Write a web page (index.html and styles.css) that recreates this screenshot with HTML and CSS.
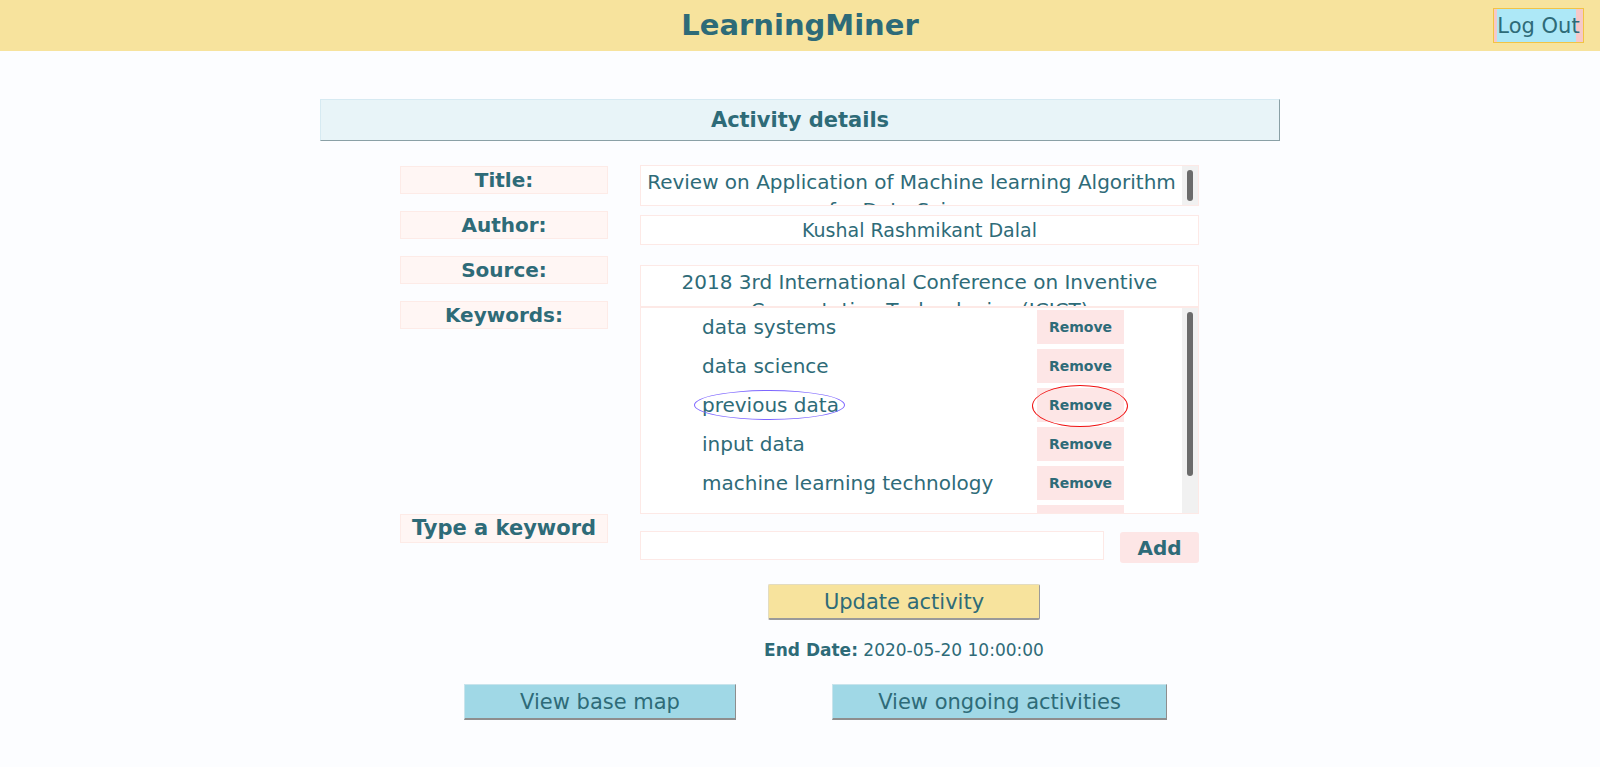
FILE: index.html
```html
<!DOCTYPE html>
<html lang="en">
<head>
<meta charset="utf-8">
<title>LearningMiner</title>
<link rel="stylesheet" href="styles.css">
</head>
<body>
<header class="topbar">
  <div class="topbar-side"></div>
  <h1 class="brand">LearningMiner</h1>
  <div class="topbar-side topbar-right"><button class="logout">Log Out</button></div>
</header>
<main class="page">
  <h2 class="section-title">Activity details</h2>
  <section class="details">
    <div class="labels">
      <div class="label">Title:</div>
      <div class="label">Author:</div>
      <div class="label">Source:</div>
      <div class="label">Keywords:</div>
    </div>
    <div class="values">
      <div class="value value-title">
        <div class="scroll-content">Review on Application of Machine learning Algorithm for Data Science</div>
        <div class="scrollbar"><div class="thumb thumb-title"></div></div>
      </div>
      <div class="value value-author">Kushal Rashmikant Dalal</div>
      <div class="value value-source">2018 3rd International Conference on Inventive Computation Technologies (ICICT)</div>
      <div class="keywords">
        <div class="kw-list">
          <div class="kw-row"><span class="kw-cell"><span class="kw-text">data systems</span></span><button class="remove">Remove</button></div>
          <div class="kw-row"><span class="kw-cell"><span class="kw-text">data science</span></span><button class="remove">Remove</button></div>
          <div class="kw-row"><span class="kw-cell"><span class="kw-text mark-blue">previous data</span></span><button class="remove mark-red">Remove</button></div>
          <div class="kw-row"><span class="kw-cell"><span class="kw-text">input data</span></span><button class="remove">Remove</button></div>
          <div class="kw-row"><span class="kw-cell"><span class="kw-text">machine learning technology</span></span><button class="remove">Remove</button></div>
          <div class="kw-row"><span class="kw-cell"><span class="kw-text">learning algorithm</span></span><button class="remove">Remove</button></div>
        </div>
        <div class="scrollbar"><div class="thumb thumb-kw"></div></div>
      </div>
    </div>
  </section>
  <section class="add-row">
    <div class="label label-type">Type a keyword</div>
    <input class="kw-input" type="text">
    <button class="add">Add</button>
  </section>
  <section class="actions">
    <button class="update">Update activity</button>
    <p class="end-date"><b>End Date:</b> 2020-05-20 10:00:00</p>
  </section>
  <section class="nav-buttons">
    <button class="nav-btn nav-base">View base map</button>
    <button class="nav-btn nav-ongoing">View ongoing activities</button>
  </section>
</main>
</body>
</html>
```
FILE: styles.css
```css
* { box-sizing: border-box; }
html, body { margin: 0; padding: 0; }
body {
  background: #fcfdff;
  font-family: "DejaVu Sans", "Liberation Sans", sans-serif;
  color: #2e6b78;
  width: 1600px;
  height: 767px;
  overflow: hidden;
}
button, input { font-family: inherit; color: inherit; }

.topbar {
  height: 51px;
  background: #f7e39d;
  display: grid;
  grid-template-columns: 1fr auto 1fr;
  align-items: start;
}
.brand {
  margin: 0;
  font-size: 29px;
  font-weight: bold;
  line-height: 51px;
  color: #2e6b78;
}
.topbar-right { display: flex; justify-content: flex-end; padding: 8px 16px 0 0; }
.logout {
  width: 91px;
  height: 35px;
  padding: 0;
  font-size: 21px;
  border: 1px solid #f2c443;
  background: linear-gradient(to right, #f5c8c8 0, #f5c8c8 3px, #ade8f7 3px, #ade8f7 82px, #f5c8c8 82px);
  color: #2e6b78;
}

.page { width: 960px; margin: 48px auto 0; }
.section-title {
  margin: 0;
  height: 42px;
  line-height: 41px;
  text-align: center;
  font-size: 21px;
  font-weight: bold;
  background: #e8f4f8;
  border-top: 1px solid #d6eaf2;
  border-left: 1px solid #d6eaf2;
  border-bottom: 1px solid #8aa0a6;
  border-right: 1px solid #8aa0a6;
}

.details {
  display: flex;
  gap: 32px;
  padding-left: 80px;
  margin-top: 24px;
}
.labels { width: 208px; display: flex; flex-direction: column; gap: 17px; padding-top: 1px; }
.label {
  height: 28px;
  line-height: 26px;
  background: #fff6f4;
  border: 1px solid #fdebe7;
  text-align: center;
  font-weight: bold;
  font-size: 20px;
}
.values { width: 559px; display: flex; flex-direction: column; }
.value {
  background: #fff;
  border: 1px solid #fde9e6;
  text-align: center;
  font-size: 20px;
  line-height: 28px;
  padding: 2px 4px 0;
}
.value-title {
  height: 41px;
  overflow: hidden;
  display: flex;
  padding: 0;
}
.scroll-content { flex: 1; padding: 2px 4px 0; overflow: hidden; }
.scrollbar {
  width: 16px;
  flex: none;
  background: #f1f1f1;
  padding: 4px 5px;
}
.thumb { background: #6b6b6b; border-radius: 3px; width: 6px; }
.thumb-title { height: 31px; }
.thumb-kw { height: 164px; }

.value-author { height: 30px; margin-top: 9px; font-size: 19px; line-height: 28px; padding-top: 0; }
.value-source { height: 42px; margin-top: 20px; overflow: hidden; }
.keywords {
  height: 207px;
  margin-top: 0;
  background: #fff;
  border: 1px solid #fde9e6;
  display: flex;
  overflow: hidden;
}
.kw-list { flex: 1; padding: 2px 0 0 61px; overflow: hidden; }
.kw-row { display: flex; align-items: center; height: 34px; margin-bottom: 5px; }
.kw-cell { width: 335px; flex: none; }
.kw-text { font-size: 20px; line-height: 24px; position: relative; display: inline-block; }
.remove {
  width: 87px;
  height: 34px;
  padding: 0;
  border: none;
  background: #fde6e6;
  font-size: 14px;
  font-weight: bold;
  position: relative;
}
.mark-blue::after {
  content: "";
  position: absolute;
  left: -8px; right: -6px; top: -3px; bottom: -3px;
  border: 1px solid #7d66ff;
  border-radius: 50%;
}
.mark-red::after {
  content: "";
  position: absolute;
  left: -5px; right: -4px; top: -3px; bottom: -5px;
  border: 1px solid #f01010;
  border-radius: 50%;
}

.add-row {
  display: flex;
  align-items: flex-start;
  padding-left: 80px;
  margin-top: 0;
}
.label-type { width: 208px; height: 29px; font-size: 21px; }
.kw-input {
  width: 464px;
  height: 29px;
  margin-top: 17px;
  margin-left: 32px;
  border: 1px solid #fde9e6;
  background: #fff;
  outline: none;
}
.add {
  width: 79px;
  height: 31px;
  margin-top: 18px;
  margin-left: 16px;
  border: none;
  border-radius: 3px;
  background: #fde6e6;
  font-size: 20px;
  font-weight: bold;
  padding: 0;
}

.actions {
  display: flex;
  flex-direction: column;
  align-items: center;
  padding-left: 208px;
  margin-top: 21px;
}
.update {
  width: 272px;
  height: 36px;
  background: #f7e39d;
  font-size: 21px;
  border-top: 1px solid #e3dcc0;
  border-left: 1px solid #e3dcc0;
  border-right: 1px solid #9a9a9a;
  border-bottom: 2px solid #9a9a9a;
  border-radius: 2px;
  padding: 0;
}
.end-date { margin: 20px 0 0; font-size: 17px; line-height: 20px; }
.end-date b { font-weight: bold; }

.nav-buttons {
  display: flex;
  gap: 96px;
  padding-left: 144px;
  margin-top: 24px;
}
.nav-btn {
  height: 36px;
  background: #a0d8e6;
  font-size: 21px;
  border-top: 1px solid #c8e4ec;
  border-left: 1px solid #c8e4ec;
  border-right: 1px solid #8e8e8e;
  border-bottom: 2px solid #8e8e8e;
  padding: 0;
}
.nav-base { width: 272px; }
.nav-ongoing { width: 335px; }
```
